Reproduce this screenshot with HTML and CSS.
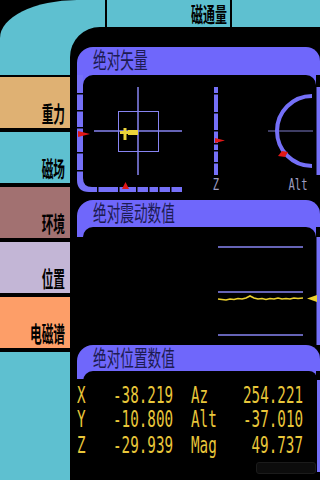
FILE: index.html
```html
<!DOCTYPE html>
<html>
<head>
<meta charset="utf-8">
<link rel="stylesheet" href="styles.css">
</head>
<body>
<div class="screen">
  <div class="elbow">
    <div class="elbow-spacer"></div>
    <div class="sep"></div>
    <div class="seg"><span class="seg-label">磁通量</span></div>
    <div class="sep"></div>
    <div class="seg-rest"></div>
  </div>

  <nav class="menu">
    <div class="item tan"><span class="lbl">重力</span></div>
    <div class="item cyan"><span class="lbl">磁场</span></div>
    <div class="item mauve"><span class="lbl">环境</span></div>
    <div class="item lav"><span class="lbl">位置</span></div>
    <div class="item orange"><span class="lbl">电磁谱</span></div>
    <div class="item cyan last"></div>
  </nav>

  <main class="content">
    <section class="panel p1">
      <div class="head"><span class="title">绝对矢量</span></div>
      <svg class="pbody" width="243" height="118" viewBox="0 0 243 118">
        <rect x="0" y="0" width="239" height="12" fill="#6f67fb"/>
        <rect x="6" y="0" width="233" height="118" rx="10" fill="#000"/>
        <path d="M0,0 H6 V103 Q6,112 15,112 H105 V117 H12 Q0,117 0,105 Z" fill="#7570f8"/>
        <g fill="#000">
          <rect x="0" y="18" width="6" height="1.5"/>
          <rect x="0" y="35" width="6" height="1.5"/>
          <rect x="0" y="52" width="6" height="1.5"/>
          <rect x="0" y="77" width="6" height="1.5"/>
          <rect x="0" y="95" width="6" height="1.5"/>
          <rect x="20" y="112" width="1.5" height="5"/>
          <rect x="41" y="112" width="1.5" height="5"/>
          <rect x="59" y="112" width="1.5" height="5"/>
          <rect x="71" y="112" width="1.5" height="5"/>
          <rect x="81" y="112" width="1.5" height="5"/>
          <rect x="93" y="112" width="1.5" height="5"/>
        </g>
        <!-- crosshair -->
        <line x1="61" y1="12" x2="61" y2="100" stroke="#8784f2" stroke-width="1.5"/>
        <line x1="17" y1="56" x2="105" y2="56" stroke="#8784f2" stroke-width="1.5"/>
        <rect x="41.5" y="36.5" width="40" height="40" fill="none" stroke="#8784f2" stroke-width="1"/>
        <g fill="#ecd43a">
          <rect x="43" y="56" width="18" height="3"/>
          <rect x="51" y="55" width="10" height="5"/>
          <rect x="46.5" y="53" width="3" height="12"/>
        </g>
        <path d="M1,56 L13,59 L1,62 Z" fill="#e01818"/>
        <path d="M48.5,107 L52,114 L45,114 Z" fill="#e01818"/>
        <!-- Z bar -->
        <rect x="137" y="12" width="4" height="88" fill="#7570f8"/>
        <g fill="#000">
          <rect x="137" y="18" width="4" height="1.5"/>
          <rect x="137" y="37" width="4" height="1.5"/>
          <rect x="137" y="55" width="4" height="1.5"/>
          <rect x="137" y="68" width="4" height="1.5"/>
          <rect x="137" y="75" width="4" height="1.5"/>
          <rect x="137" y="87" width="4" height="1.5"/>
        </g>
        <path d="M138,63 L148,65.5 L138,68 Z" fill="#e01818"/>
        <text class="glbl" transform="translate(139 115) scale(1 1.45)" text-anchor="middle">Z</text>
        <!-- Alt arc -->
        <line x1="191" y1="56" x2="236" y2="56" stroke="#7c7ac8" stroke-width="1.2"/>
        <path d="M235,21 A35,35 0 0 0 235,91" fill="none" stroke="#7570f8" stroke-width="4"/>
        <path d="M201,81 L205,76 L211,77 L208,82 Z" fill="#e01818"/>
        <text class="glbl" transform="translate(221 115) scale(1 1.45)" text-anchor="middle">Alt</text>
        <rect x="239.5" y="12" width="3.5" height="88" fill="#7570f8"/>
      </svg>
    </section>

    <section class="panel p2">
      <div class="head"><span class="title">绝对震动数值</span></div>
      <svg class="pbody" width="243" height="118" viewBox="0 0 243 118">
        <rect x="0" y="0" width="239" height="10" fill="#6f67fb"/>
        <rect x="6" y="0" width="233" height="118" rx="10" fill="#000"/>
        <rect x="239.5" y="10" width="3.5" height="108" fill="#7570f8"/>
        <g stroke="#8784f2" stroke-width="1.5">
          <line x1="141" y1="20" x2="226" y2="20"/>
          <line x1="141" y1="65" x2="226" y2="65"/>
          <line x1="141" y1="108" x2="226" y2="108"/>
        </g>
        <polyline fill="none" stroke="#ecd02e" stroke-width="1.6"
          points="141,72 145,72.5 149,73 153,72 157,72.5 161,71.5 165,72 169,71 173,69 177,71 181,72 185,71.5 189,72.5 193,71.5 197,72 201,71 205,72 209,71.5 213,72 217,71 221,71.5 226,71"/>
        <path d="M230,71.5 L240,68 L240,75 Z" fill="#ecd02e"/>
      </svg>
    </section>

    <section class="panel p3">
      <div class="head"><span class="title">绝对位置数值</span></div>
      <div class="p3-body">
        <div class="p3-main">
          <div class="readout">
            <span>X</span><span class="r">-38.219</span><span class="lab">Az</span><span class="r">254.221</span>
            <span>Y</span><span class="r">-10.800</span><span class="lab">Alt</span><span class="r">-37.010</span>
            <span>Z</span><span class="r">-29.939</span><span class="lab">Mag</span><span class="r">49.737</span>
          </div>
          <div class="toast"></div>
        </div>
        <div class="p3-strip"></div>
      </div>
    </section>
  </main>
</div>
</body>
</html>
```

FILE: styles.css
```css
html, body {
  margin: 0;
  padding: 0;
  background: #000;
}

.screen {
  width: 320px;
  height: 480px;
  overflow: hidden;
  display: grid;
  grid-template-columns: 70px 250px;
  grid-template-rows: 27px 48px 1fr;
  background: #000;
}

/* top elbow + bar */
.elbow {
  grid-column: 1 / 3;
  grid-row: 1 / 3;
  background: #5ec0d0;
  border-top-left-radius: 77px 38px;
  display: flex;
  align-items: flex-start;
}
.elbow-spacer { width: 105px; flex: none; }
.sep { width: 2px; height: 27px; background: #000; flex: none; }
.seg {
  width: 123px;
  height: 27px;
  flex: none;
  display: flex;
  justify-content: flex-end;
  align-items: center;
  padding-right: 3px;
  box-sizing: border-box;
}
.seg-label {
  font: bold 21px/23px "Noto Sans CJK SC", sans-serif;
  color: #000;
  transform: scaleX(0.57);
  transform-origin: right center;
  display: block;
  white-space: nowrap;
}
.seg-rest { flex: 1; }

/* left menu */
.menu {
  grid-column: 1;
  grid-row: 3;
  display: flex;
  flex-direction: column;
  gap: 4px;
  padding-top: 2px;
}
.item {
  height: 51px;
  flex: none;
  display: flex;
  justify-content: flex-end;
  align-items: flex-end;
  padding: 0 5px 5px 0;
  box-sizing: border-box;
}
.item.last { flex: 1; height: auto; }
.tan { background: #dfb173; }
.cyan { background: #5ec0d0; }
.mauve { background: #a27171; }
.lav { background: #c3b6d6; }
.orange { background: #fd9e68; }
.lbl {
  font: bold 22px/22px "Noto Sans CJK SC", sans-serif;
  color: #000;
  transform: scaleX(0.53);
  transform-origin: right bottom;
  display: block;
  white-space: nowrap;
}

/* content */
.content {
  grid-column: 2;
  grid-row: 2 / 4;
  background: #000;
  border-top-left-radius: 30px;
  padding: 20px 0 0 7px;
  display: flex;
  flex-direction: column;
  min-height: 0;
}
.panel {
  width: 243px;
  display: flex;
  flex-direction: column;
  flex: none;
}
.head {
  background: #6f67fb;
  border-radius: 16px 14px 0 0;
  padding-left: 16px;
  box-sizing: border-box;
}
.p1 .head { height: 28px; }
.p2 .head { height: 27px; }
.p3 .head { height: 26px; }
.p2 { margin-top: 7px; }
.p3 { flex: 1; }
.title {
  display: block;
  font: 22px/22px "Noto Sans CJK SC", sans-serif;
  color: #1d1b52;
  transform: scaleX(0.62);
  transform-origin: left center;
  white-space: nowrap;
}
.pbody { display: block; }
.glbl {
  font: 10.5px "DejaVu Sans Mono", monospace;
  fill: #9c9cc0;
}

/* panel 3 */
.p3-body {
  flex: 1;
  display: grid;
  grid-template-columns: 6px 233.5px 3.5px;
  background: linear-gradient(#6f67fb, #6f67fb) 0 0 / 239px 8px no-repeat;
}
.p3-main {
  grid-column: 2;
  background: #000;
  border-radius: 10px 8px 0 0;
  padding-top: 12px;
  display: flex;
  flex-direction: column;
}
.readout {
  margin-left: -6px;
  display: grid;
  grid-template-columns: 36px 60px 70px 60px;
  font: 14.25px/15.35px "DejaVu Sans Mono", monospace;
  color: #e8c63a;
  transform: scaleY(1.63);
  transform-origin: left top;
}
.readout .r { text-align: right; }
.readout .lab { padding-left: 18px; }
.toast {
  width: 58px;
  height: 10px;
  margin: 33px 1px 0 auto;
  background: #0c0c0c;
  border: 1px solid #1b1b1b;
  border-radius: 3px;
}
.p3-strip {
  grid-column: 3;
  background: #7570f8;
  margin-top: 9px;
  height: 92px;
}
```
